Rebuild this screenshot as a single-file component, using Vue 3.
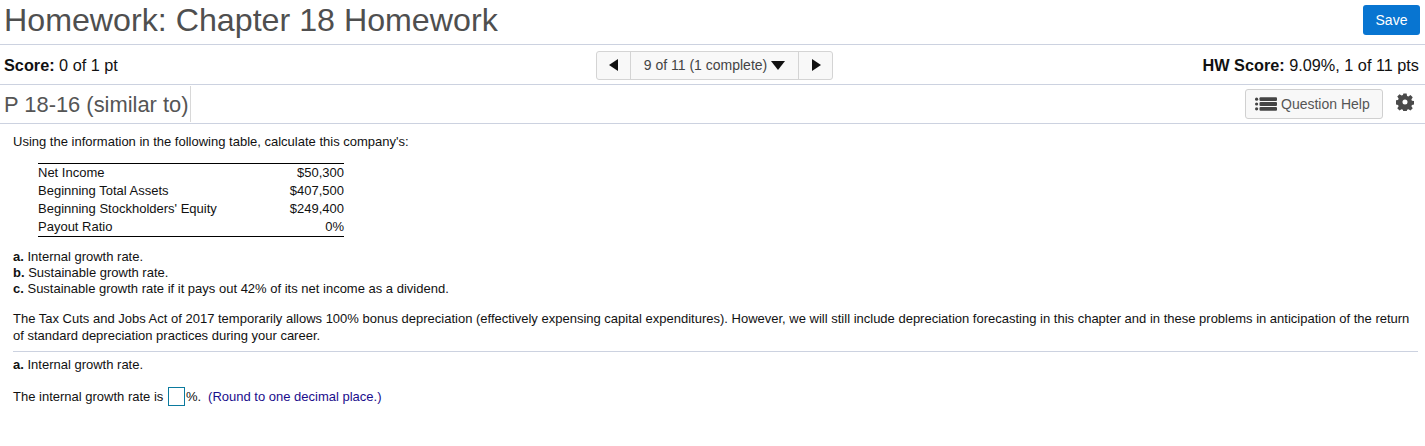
<script setup>
const rows = [
  ['Net Income', '$50,300'],
  ['Beginning Total Assets', '$407,500'],
  ["Beginning Stockholders' Equity", '$249,400'],
  ['Payout Ratio', '0%']
]
</script>

<template>
  <div class="page">
    <header class="top">
      <h1>Homework: Chapter 18 Homework</h1>
      <button class="save">Save</button>
    </header>
    <div class="scorebar">
      <div class="score"><b>Score:</b> 0 of 1 pt</div>
      <div class="pager">
        <span class="pg-btn"><svg width="10" height="12" viewBox="0 0 10 12"><path d="M9 0v12L0 6z" fill="#111"/></svg></span>
        <span class="pg-mid">9 of 11 (1 complete)<svg width="14" height="9" viewBox="0 0 14 9"><path d="M0 0h14L7 9z" fill="#111"/></svg></span>
        <span class="pg-btn"><svg width="10" height="12" viewBox="0 0 10 12"><path d="M1 0v12l9-6z" fill="#111"/></svg></span>
      </div>
      <div class="hw"><b>HW Score:</b> 9.09%, 1 of 11 pts</div>
    </div>
    <div class="qbar">
      <div class="qname">P 18-16 (similar to)</div>
      <div class="qtools">
        <button class="help">
          <svg width="22" height="14" viewBox="0 0 22 14"><g fill="#444"><circle cx="1.6" cy="2.2" r="1.6"/><circle cx="1.6" cy="7" r="1.6"/><circle cx="1.6" cy="11.8" r="1.6"/><rect x="4.5" y="0.3" width="17.5" height="3.8" rx="1"/><rect x="4.5" y="5.1" width="17.5" height="3.8" rx="1"/><rect x="4.5" y="9.9" width="17.5" height="3.8" rx="1"/></g></svg>
          Question Help
        </button>
        <svg class="gear" width="18" height="18" viewBox="0 0 20 20"><path fill="#4a4a4a" fill-rule="evenodd" d="M8.2 0.5h3.6l.5 2.7 1.5.6 2.3-1.5 2.5 2.5-1.5 2.3.6 1.5 2.7.5v3.6l-2.7.5-.6 1.5 1.5 2.3-2.5 2.5-2.3-1.5-1.5.6-.5 2.7H8.2l-.5-2.7-1.5-.6-2.3 1.5-2.5-2.5 1.5-2.3-.6-1.5-2.7-.5V8.2l2.7-.5.6-1.5-1.5-2.3 2.5-2.5 2.3 1.5 1.5-.6zM10 7.2a2.8 2.8 0 1 0 0 5.6 2.8 2.8 0 0 0 0-5.6z"/></svg>
      </div>
    </div>
    <main class="content">
      <p class="intro">Using the information in the following table, calculate this company's:</p>
      <table class="data">
        <tbody>
          <tr v-for="r in rows" :key="r[0]"><td>{{ r[0] }}</td><td class="num">{{ r[1] }}</td></tr>
        </tbody>
      </table>
      <div class="list">
        <div><b>a.</b> Internal growth rate.</div>
        <div><b>b.</b> Sustainable growth rate.</div>
        <div><b>c.</b> Sustainable growth rate if it pays out 42% of its net income as a dividend.</div>
      </div>
      <p class="note">The Tax Cuts and Jobs Act of 2017 temporarily allows 100% bonus depreciation (effectively expensing capital expenditures). However, we will still include depreciation forecasting in this chapter and in these problems in anticipation of the return of standard depreciation practices during your career.</p>
      <hr class="sep" />
      <div class="part"><b>a.</b> Internal growth rate.</div>
      <div class="answer">The internal growth rate is <span class="box"></span>%.<span class="hint">(Round to one decimal place.)</span></div>
    </main>
  </div>
</template>

<style>
html, body { margin: 0; background: #fff; }
</style>

<style scoped>
.page { width: 1425px; height: 446px; overflow: hidden; font-family: "Liberation Sans", Arial, sans-serif; color: #111; box-sizing: border-box; }
.top { height: 44px; display: flex; justify-content: space-between; align-items: flex-start; padding: 0 5px 0 4px; border-bottom: 1px solid #ccd2e0; }
h1 { margin: 0; font-size: 32.2px; font-weight: 400; line-height: 40px; color: #4f4f4f; }
.save { margin-top: 5px; width: 57px; height: 30px; border: 0; border-radius: 3px; background: #0875d1; color: #fff; font: 14px "Liberation Sans", Arial, sans-serif; padding: 0; }
.scorebar { height: 40px; display: grid; grid-template-columns: 1fr auto 1fr; align-items: center; padding: 1px 6px 0 4px; box-sizing: border-box; border-bottom: 1px solid #ccd2e0; font-size: 16.25px; }
.hw { text-align: right; }
.pager { display: flex; height: 29px; margin-left: 6px; border: 1px solid #d4d4d4; border-radius: 3px; background: #f8f8f8; box-sizing: border-box; }
.pg-btn { width: 33px; display: flex; align-items: center; justify-content: center; }
.pg-mid { width: 167px; display: flex; align-items: center; justify-content: center; gap: 4px; border-left: 1px solid #d4d4d4; border-right: 1px solid #d4d4d4; font-size: 14px; color: #444; }
.qbar { height: 38px; display: flex; justify-content: space-between; align-items: center; padding: 0 11px 0 4px; border-bottom: 1px solid #ccd2e0; }
.qname { font-size: 21.9px; color: #555; height: 36px; line-height: 38px; padding-right: 1px; border-right: 1px solid #d8d8d8; }
.qtools { display: flex; align-items: center; gap: 13px; }
.gear { margin-bottom: 4px; }
.help { display: flex; align-items: center; gap: 4px; height: 30px; width: 138px; padding: 0 0 0 9px; box-sizing: border-box; border: 1px solid #d0d0d0; border-radius: 3px; background: #f8f8f8; color: #555; font: 14px "Liberation Sans", Arial, sans-serif; }
.content { padding: 0 7px 0 13px; font-size: 13px; line-height: 18px; }
.intro { margin: 9px 0 0; }
.data { margin: 12px 0 0 25px; border-collapse: collapse; width: 306px; border-top: 1px solid #000; border-bottom: 1px solid #000; }
.data td { padding: 0; height: 18px; line-height: 18px; }
.num { text-align: right; }
.list { margin-top: 12px; line-height: 16px; }
.note { margin: 13px 0 0; line-height: 17px; }
.sep { margin: 7px 0 0; border: 0; border-top: 1px solid #ccd2e0; }
.part { margin-top: 4px; }
.answer { margin-top: 13px; display: flex; align-items: center; white-space: pre; }
.box { width: 15px; height: 17px; border: 1px solid #0b7a9e; margin: 0 1px 0 1px; box-sizing: content-box; }
.hint { color: #1a0d8c; margin-left: 7px; }
</style>
